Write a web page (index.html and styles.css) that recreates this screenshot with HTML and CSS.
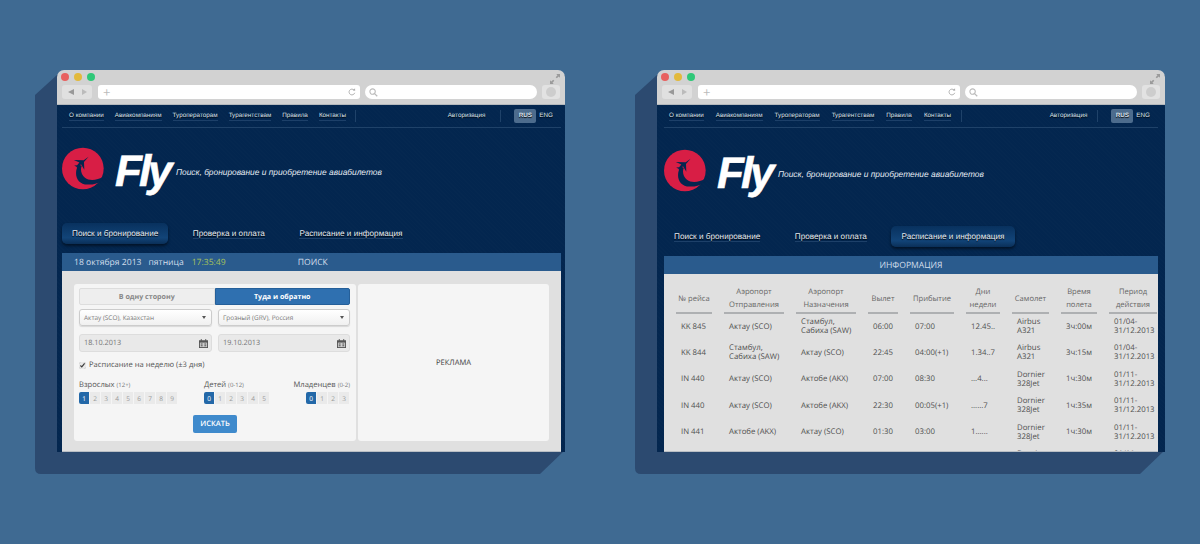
FILE: index.html
```html
<!DOCTYPE html>
<html>
<head>
    <meta charset="UTF-8">
    <title>Fly</title>
    <link rel="stylesheet" href="styles.css">
</head>
<body>
    <svg class="defs" width="0" height="0">
        <symbol id="logo" viewBox="20 22 128 128">
            <circle cx="83.5" cy="86" r="63.5" fill="#d81e45"/>
            <path d="M72 74C54 96 62 136 100 135C118 135 134 130 150 116L150 109C128 122 104 125 90 114C79 104 75 90 80 78Z" fill="#04264f"/>
            <path d="M101 50L86 61L56 60L73 68L66 76L57 77L64 81L68 88L71 80L78 73L88 90L87 66Z" fill="#04264f"/>
        </symbol>
        <symbol id="calendar" viewBox="0 0 10 10">
            <path d="M0 1.5H2V0H3V1.5H7V0H8V1.5H10V10H0Z" fill="#555"/>
            <path d="M1 4H9V9H1Z" fill="#ccc"/>
            <path d="M2 5H4V6H2ZM6 5H8V6H6ZM2 7H4V8H2ZM6 7H8V8H6Z" fill="#555"/>
        </symbol>
        <symbol id="search" viewBox="0 0 10 10">
            <circle cx="4" cy="4" r="3" fill="none" stroke="#bbb" stroke-width="1.2"/>
            <path d="M6.2 6.2L9.2 9.2" stroke="#bbb" stroke-width="1.4"/>
        </symbol>
        <symbol id="reload" viewBox="0 0 10 10">
            <path d="M7.6 2.6A3.6 3.6 0 1 0 8.4 6" fill="none" stroke="#aaa" stroke-width="1.1"/>
            <path d="M6 3.2L9 3.4L8.8 .4Z" fill="#aaa"/>
        </symbol>
        <symbol id="expand" viewBox="0 0 12 12">
            <path d="M12 0H7.5L9 1.5L6.8 3.8L8.2 5.2L10.5 3L12 4.5ZM0 12H4.5L3 10.5L5.2 8.2L3.8 6.8L1.5 9L0 7.5Z" fill="#9a9a9a"/>
        </symbol>
    </svg>

    <div class="desk">
        <div class="window">
            <svg class="drop" width="530" height="404" viewBox="0 0 530 404"><path d="M22 0L0 20V393Q0 399 6 399H505L530 375V0Z" fill="#2c4a70"/></svg>
            <div class="chrome">
                <div class="lights"><span class="light red"></span><span class="light yellow"></span><span class="light green"></span></div>
                <svg class="expand"><use href="#expand"/></svg>
                <div class="toolbar">
                    <div class="arrows"><span class="arrow back"></span><span class="arrow forward"></span></div>
                    <div class="address"><span class="plus">+</span><svg class="reload"><use href="#reload"/></svg></div>
                    <div class="searchbar"><svg class="lens"><use href="#search"/></svg></div>
                    <div class="square"><span></span></div>
                </div>
            </div>
            <div class="site site-search">
                <div class="topnav">
                    <a>О компании</a><a>Авиакомпаниям</a><a>Туроператорам</a><a>Турагентствам</a><a>Правила</a><a>Контакты</a>
                    <i class="sep"></i>
                    <a class="login">Авторизация</a>
                    <i class="sep"></i>
                    <b class="lang active">RUS</b><b class="lang">ENG</b>
                </div>
                <div class="brand">
                    <svg class="logo"><use href="#logo"/></svg>
                    <div class="fly">Fly</div>
                    <div class="tagline">Поиск, бронирование и приобретение авиабилетов</div>
                </div>
                <div class="tabs">
                    <div class="tab active"><span>Поиск и бронирование</span></div>
                    <div class="tab"><span>Проверка и оплата</span></div>
                    <div class="tab"><span>Расписание и информация</span></div>
                </div>
                <div class="bar">
                    <span class="date">18 октября 2013</span>
                    <span class="day">пятница</span>
                    <span class="time">17:35:49</span>
                    <span class="bar-title">ПОИСК</span>
                </div>
                <div class="panel">
                    <div class="card form">
                        <div class="toggle">
                            <div class="way">В одну сторону</div>
                            <div class="way active">Туда и обратно</div>
                        </div>
                        <div class="fields">
                            <div class="select">Актау (SCO), Казахстан</div>
                            <div class="select">Грозный (GRV), Россия</div>
                        </div>
                        <div class="fields dates">
                            <div class="date-input">18.10.2013<svg class="cal"><use href="#calendar"/></svg></div>
                            <div class="date-input">19.10.2013<svg class="cal"><use href="#calendar"/></svg></div>
                        </div>
                        <label class="week"><input type="checkbox" checked>Расписание на неделю (±3 дня)</label>
                        <div class="people">
                            <div class="group">
                                <div class="group-name">Взрослых <small>(12+)</small></div>
                                <div class="counts"><span class="on">1</span><span>2</span><span>3</span><span>4</span><span>5</span><span>6</span><span>7</span><span>8</span><span>9</span></div>
                            </div>
                            <div class="group kids">
                                <div class="group-name">Детей <small>(0-12)</small></div>
                                <div class="counts"><span class="on">0</span><span>1</span><span>2</span><span>3</span><span>4</span><span>5</span></div>
                            </div>
                            <div class="group babies">
                                <div class="group-name">Младенцев <small>(0-2)</small></div>
                                <div class="counts"><span class="on">0</span><span>1</span><span>2</span><span>3</span></div>
                            </div>
                        </div>
                        <button class="find">ИСКАТЬ</button>
                    </div>
                    <div class="card ad">РЕКЛАМА</div>
                </div>
            </div>
        </div>

        <div class="window">
            <svg class="drop" width="530" height="404" viewBox="0 0 530 404"><path d="M22 0L0 20V393Q0 399 6 399H505L530 375V0Z" fill="#2c4a70"/></svg>
            <div class="chrome">
                <div class="lights"><span class="light red"></span><span class="light yellow"></span><span class="light green"></span></div>
                <svg class="expand"><use href="#expand"/></svg>
                <div class="toolbar">
                    <div class="arrows"><span class="arrow back"></span><span class="arrow forward"></span></div>
                    <div class="address"><span class="plus">+</span><svg class="reload"><use href="#reload"/></svg></div>
                    <div class="searchbar"><svg class="lens"><use href="#search"/></svg></div>
                    <div class="square"><span></span></div>
                </div>
            </div>
            <div class="site site-info">
                <div class="topnav">
                    <a>О компании</a><a>Авиакомпаниям</a><a>Туроператорам</a><a>Турагентствам</a><a>Правила</a><a>Контакты</a>
                    <i class="sep"></i>
                    <a class="login">Авторизация</a>
                    <i class="sep"></i>
                    <b class="lang active">RUS</b><b class="lang">ENG</b>
                </div>
                <div class="brand">
                    <svg class="logo"><use href="#logo"/></svg>
                    <div class="fly">Fly</div>
                    <div class="tagline">Поиск, бронирование и приобретение авиабилетов</div>
                </div>
                <div class="tabs">
                    <div class="tab"><span>Поиск и бронирование</span></div>
                    <div class="tab"><span>Проверка и оплата</span></div>
                    <div class="tab active"><span>Расписание и информация</span></div>
                </div>
                <div class="bar bar-center">ИНФОРМАЦИЯ</div>
                <div class="panel panel-table">
                    <table class="flights">
                        <colgroup><col class="c1"><col class="c2"><col class="c2"><col class="c3"><col class="c4"><col class="c5"><col class="c6"><col class="c7"><col class="c8"></colgroup>
                        <thead>
                            <tr><th>№ рейса</th><th>Аэропорт Отправления</th><th>Аэропорт Назначения</th><th>Вылет</th><th>Прибытие</th><th>Дни недели</th><th>Самолет</th><th>Время полета</th><th>Период действия</th></tr>
                        </thead>
                        <tbody>
                            <tr><td>KK 845</td><td>Актау (SCO)</td><td>Стамбул, Сабиха (SAW)</td><td>06:00</td><td>07:00</td><td>12.45..</td><td>Airbus A321</td><td>3ч:00м</td><td>01/04- 31/12.2013</td></tr>
                            <tr><td>KK 844</td><td>Стамбул, Сабиха (SAW)</td><td>Актау (SCO)</td><td>22:45</td><td>04:00(+1)</td><td>1.34..7</td><td>Airbus A321</td><td>3ч:15м</td><td>01/04- 31/12.2013</td></tr>
                            <tr><td>IN 440</td><td>Актау (SCO)</td><td>Актобе (AKX)</td><td>07:00</td><td>08:30</td><td>...4...</td><td>Dornier 328Jet</td><td>1ч:30м</td><td>01/11- 31/12.2013</td></tr>
                            <tr><td>IN 440</td><td>Актау (SCO)</td><td>Актобе (AKX)</td><td>22:30</td><td>00:05(+1)</td><td>......7</td><td>Dornier 328Jet</td><td>1ч:35м</td><td>01/11- 31/12.2013</td></tr>
                            <tr><td>IN 441</td><td>Актобе (AKX)</td><td>Актау (SCO)</td><td>01:30</td><td>03:00</td><td>1......</td><td>Dornier 328Jet</td><td>1ч:30м</td><td>01/11- 31/12.2013</td></tr>
                            <tr><td></td><td></td><td></td><td></td><td></td><td></td><td>Dornier 328Jet</td><td></td><td>01/11- 31/12.2013</td></tr>
                        </tbody>
                    </table>
                </div>
            </div>
        </div>
    </div>
</body>
</html>
```

FILE: styles.css
```css
html, body {
    margin: 0;
    height: 544px;
    overflow: hidden;
}
body {
    background-color: #3f6a92;
    font-family: 'Open Sans', 'Noto Sans CJK SC', sans-serif;
    color: #555;
    text-rendering: geometricPrecision;
}
.defs {
    position: absolute;
}
.desk {
    display: flex;
    gap: 92px;
    padding: 70px 0 0 57px;
}
.window {
    position: relative;
    width: 508px;
    height: 382px;
    display: flex;
    flex-direction: column;
}
.drop {
    position: absolute;
    left: -22px;
    top: 5px;
}

/* browser frame */
.chrome {
    position: relative;
    height: 35px;
    box-sizing: border-box;
    padding: 3px 5px 0;
    background-color: #d2d2d2;
    border-radius: 7px 7px 0 0;
    border-bottom: 1px solid #b4b8bc;
}
.lights {
    display: flex;
    gap: 5px;
    margin-left: -1px;
}
.light {
    width: 8px;
    height: 8px;
    border-radius: 50%;
}
.red { background-color: #e8615f; }
.yellow { background-color: #e2b93b; }
.green { background-color: #2fc878; }
.expand {
    position: absolute;
    top: 4px;
    right: 5px;
    width: 10px;
    height: 10px;
}
.toolbar {
    display: flex;
    gap: 5px;
    margin-top: 4px;
    height: 14px;
}
.arrows {
    display: flex;
    align-items: center;
    gap: 8px;
    width: 30px;
    box-sizing: border-box;
    padding-left: 6px;
    background-color: #e0e0e0;
    border-radius: 3px;
}
.arrow {
    width: 0;
    height: 0;
    border-top: 3px solid transparent;
    border-bottom: 3px solid transparent;
}
.back { border-right: 6px solid #999; }
.forward { border-left: 5px solid #bbb; }
.address {
    display: flex;
    align-items: center;
    justify-content: space-between;
    width: 262px;
    box-sizing: border-box;
    padding: 0 4px 0 5px;
    margin-left: 1px;
    background-color: #fff;
    border-radius: 3px;
}
.plus {
    font-size: 13px;
    line-height: 14px;
    color: #bbb;
}
.reload {
    width: 8px;
    height: 8px;
}
.searchbar {
    display: flex;
    align-items: center;
    width: 172px;
    box-sizing: border-box;
    padding-left: 4px;
    background-color: #fff;
    border-radius: 7px;
}
.lens {
    width: 9px;
    height: 9px;
}
.square {
    display: flex;
    align-items: center;
    justify-content: center;
    width: 18px;
    background-color: #e2e2e2;
    border-radius: 3px;
}
.square span {
    width: 10px;
    height: 10px;
    border-radius: 50%;
    background-color: #cdcdcd;
}

/* site */
.site {
    position: relative;
    flex: 1;
    min-height: 0;
    display: flex;
    flex-direction: column;
    overflow: hidden;
    box-sizing: border-box;
    background-color: #03264f;
    background-image: repeating-linear-gradient(45deg, rgba(255,255,255,0.008) 0 1px, transparent 1px 3px);
    padding: 0 4px 0 5px;
}
.site-info {
    padding: 0 7px;
}
.topnav {
    display: flex;
    align-items: center;
    flex: none;
    height: 22px;
    padding: 0 6px 0 7px;
    border-bottom: 1px solid #1f4269;
    font-family: 'Liberation Sans', sans-serif;
    font-size: 6.3px;
    color: #dbe4ee;
    text-shadow: 0 1px 1px #000;
}
.site-info .topnav {
    padding-left: 5px;
}
.topnav a {
    margin-right: 11px;
    padding-bottom: 1px;
    border-bottom: 1px solid #1d4069;
}
.site-info .topnav a {
    margin-right: 12px;
}
.sep {
    width: 1px;
    height: 12px;
    margin-left: -2px;
    background-color: #1f4269;
}
.topnav .login {
    margin: 0 17px 0 auto;
    border-bottom: 0;
}
.lang {
    font-weight: normal;
    padding: 0 2px;
    line-height: 14px;
}
.lang.active {
    width: 22px;
    box-sizing: border-box;
    margin: 0 1px 0 13px;
    text-align: center;
    font-weight: bold;
    background-color: #4d6c8d;
    border-radius: 2px;
}
.brand {
    display: flex;
    align-items: flex-start;
    flex: none;
    height: 76px;
    padding-top: 19px;
}
.site-info .brand {
    height: 77px;
    padding-top: 21px;
}
.logo {
    width: 42px;
    height: 43px;
    flex: none;
}
.fly {
    width: 61px;
    margin: 3px 0 0 11px;
    font-family: 'Liberation Sans', sans-serif;
    font-size: 44px;
    line-height: 44px;
    font-weight: bold;
    font-style: italic;
    letter-spacing: -3px;
    color: #fff;
    -webkit-text-stroke: 0.6px #fff;
}
.tagline {
    margin-top: 19px;
    font-family: 'Liberation Sans', sans-serif;
    font-size: 8.37px;
    line-height: 12px;
    font-style: italic;
    color: #e4ebf2;
    white-space: nowrap;
}
.tabs {
    display: flex;
    gap: 14.5px;
    flex: none;
    height: 21px;
    margin-bottom: 9px;
    font-family: 'Liberation Sans', sans-serif;
    font-size: 8.2px;
    color: #e6edf4;
    text-shadow: 0 1px 1px #000;
}
.tab {
    display: flex;
    align-items: center;
    padding: 0 10px;
    border-radius: 5px;
}
.tab span {
    border-bottom: 1px solid #1d4069;
}
.tab.active {
    background: linear-gradient(#08315e, #124478 70%, #0a2f58);
    box-shadow: 0 2px 3px rgba(0, 0, 0, 0.5);
}
.tab.active span {
    border-bottom: 0;
}
.bar {
    display: flex;
    align-items: center;
    flex: none;
    height: 18px;
    padding-left: 12px;
    background-color: #2a5b8d;
    font-size: 8.6px;
    color: #d3dfec;
}
.date { margin-right: 7px; }
.day { margin-right: 8px; }
.time {
    width: 106px;
    color: #a6c25c;
}
.bar-center {
    justify-content: center;
    padding: 0;
}
.panel {
    display: flex;
    flex: 1;
    min-height: 0;
    gap: 2px;
    padding: 13px 12px 10px;
    background-color: #e0e0e0;
    border-bottom: 1px solid #b9bec4;
}
.card {
    background-color: #f5f5f5;
    border-radius: 3px;
}
.form {
    width: 282px;
    flex: none;
    box-sizing: border-box;
    padding: 4px 6px 0 5px;
    font-size: 7.6px;
}
.ad {
    flex: 1;
    display: flex;
    align-items: center;
    justify-content: center;
    font-size: 7.6px;
    color: #444;
}
.toggle {
    display: flex;
    height: 17px;
    font-size: 7.1px;
}
.way {
    flex: 1;
    display: flex;
    align-items: center;
    justify-content: center;
    background-color: #eee;
    border: 1px solid #ddd;
    border-radius: 2px 0 0 2px;
    font-weight: bold;
    color: #888;
}
.way.active {
    background-color: #2f70b0;
    border-color: #255f99;
    border-radius: 0 2px 2px 0;
    color: #fff;
}
.fields {
    display: grid;
    grid-template-columns: 133px 132px;
    gap: 6px;
    margin-top: 4px;
    font-size: 6.45px;
    color: #777;
}
.select {
    position: relative;
    height: 17px;
    line-height: 15px;
    box-sizing: border-box;
    padding-left: 4px;
    background: linear-gradient(#fff, #f0f0f0);
    border: 1px solid #ccc;
    border-radius: 3px;
    box-shadow: 0 1px 1px rgba(0, 0, 0, 0.12);
}
.select::after {
    content: '';
    position: absolute;
    right: 5px;
    top: 6px;
    border-left: 2px solid transparent;
    border-right: 2px solid transparent;
    border-top: 3px solid #555;
}
.dates {
    margin-top: 8px;
    font-size: 7.3px;
}
.date-input {
    display: flex;
    align-items: center;
    justify-content: space-between;
    height: 18px;
    box-sizing: border-box;
    padding: 0 3px 0 4px;
    background-color: #e9e9e9;
    border: 1px solid #ddd;
    border-radius: 3px;
}
.cal {
    width: 9px;
    height: 9px;
}
.week {
    display: flex;
    align-items: center;
    height: 12px;
    margin-top: 7px;
    color: #555;
}
.week input {
    width: 7px;
    height: 7px;
    margin: 0 3px 0 0;
    accent-color: #e8e8e8;
}
.people {
    display: flex;
    margin-top: 9px;
}
.group-name {
    line-height: 10px;
    color: #555;
    white-space: nowrap;
}
.group-name small {
    font-size: 6px;
    color: #777;
}
.kids {
    margin-left: 26px;
}
.babies {
    margin-left: auto;
    display: flex;
    flex-direction: column;
    align-items: flex-end;
}
.counts {
    display: flex;
    margin-top: 2px;
    height: 12px;
    font-size: 6.5px;
    color: #999;
}
.counts span {
    width: 11px;
    display: flex;
    align-items: center;
    justify-content: center;
    background-color: #eaeaea;
    border-right: 1px solid #f5f5f5;
    box-sizing: border-box;
}
.counts .on {
    background-color: #2368a8;
    color: #fff;
    border-radius: 2px 0 0 2px;
}
.find {
    display: block;
    width: 44px;
    height: 18px;
    margin: 11px 0 0 114px;
    padding: 0;
    border: none;
    border-radius: 2px;
    background-color: #3f8acc;
    font-family: 'Open Sans', sans-serif;
    font-size: 7.5px;
    font-weight: 600;
    color: #fff;
    text-rendering: geometricPrecision;
}

/* flights table */
.panel-table {
    display: block;
    overflow: hidden;
    padding: 12px 0 0;
}
.flights {
    table-layout: fixed;
    width: 505px;
    border-collapse: separate;
    border-spacing: 12px 0;
    font-size: 7.8px;
    color: #4f4f4f;
}
.c1 { width: 36px; }
.c2 { width: 60px; }
.c3 { width: 30px; }
.c4 { width: 44px; }
.c5 { width: 34px; }
.c6 { width: 37px; }
.c7 { width: 36px; }
.c8 { width: 48px; }
.flights th {
    height: 26px;
    padding: 0;
    font-size: 7.6px;
    font-weight: normal;
    line-height: 13px;
    text-align: center;
    border-bottom: 2px solid #aeb0b2;
    color: #666;
}
.flights td {
    height: 26px;
    padding: 0 0 0 5px;
    line-height: 9px;
}
.flights tr:nth-child(2n+3) td {
    height: 27px;
}
```
